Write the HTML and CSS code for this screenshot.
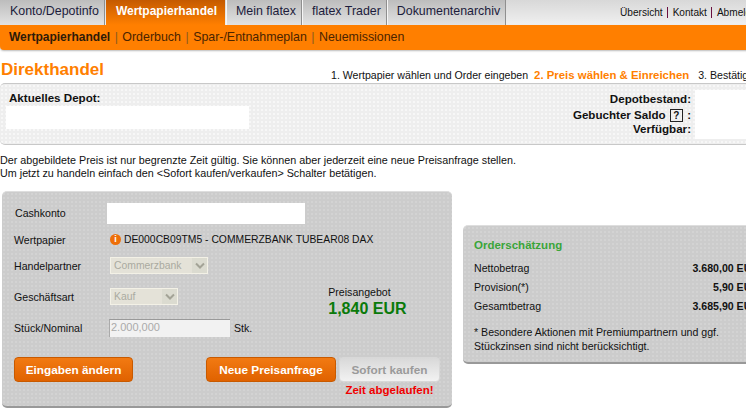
FILE: index.html
```html
<!DOCTYPE html>
<html lang="de">

<head>
  <meta charset="utf-8">
  <title>Direkthandel</title>
  <link rel="stylesheet" href="styles.css">
</head>

<body>
  <div class="page">
    <div class="topbar">
      <div class="tabs">
        <a class="tab tabFirst">Konto/Depotinfo</a>
        <a class="tab tabActive">Wertpapierhandel</a>
        <a class="tab">Mein flatex</a>
        <a class="tab">flatex Trader</a>
        <a class="tab">Dokumentenarchiv</a>
      </div>
      <div class="metaLinks">
        <a>Übersicht</a><span class="metaSep"></span><a>Kontakt</a><span class="metaSep"></span><a>Abmelden</a>
      </div>
    </div>

    <div class="subnav">
      <b>Wertpapierhandel</b><span class="subSep">|</span>Orderbuch<span class="subSep">|</span>Spar-/Entnahmeplan<span class="subSep">|</span>Neuemissionen
    </div>

    <div class="titleRow">
      <h1>Direkthandel</h1>
      <div class="steps">
        <span>1. Wertpapier wählen und Order eingeben</span>
        <b>2. Preis wählen &amp; Einreichen</b>
        <span>3. Bestätigung</span>
      </div>
    </div>

    <div class="depotBox">
      <div class="depotLeft">
        <label>Aktuelles Depot:</label>
        <div class="whiteField depotField"></div>
      </div>
      <div class="depotLabels">
        <div>Depotbestand:</div>
        <div class="saldoLine">Gebuchter Saldo <span class="helpIcon">?</span> :</div>
        <div>Verfügbar:</div>
      </div>
      <div class="whiteField depotValues"></div>
    </div>

    <p class="note">Der abgebildete Preis ist nur begrenzte Zeit gültig. Sie können aber jederzeit eine neue Preisanfrage stellen.<br>Um jetzt zu handeln einfach den &lt;Sofort kaufen/verkaufen&gt; Schalter betätigen.</p>

    <div class="panels">
      <div class="panel orderPanel">
        <div class="row rowCash">
          <label>Cashkonto</label>
          <div class="whiteField cashField"></div>
        </div>
        <div class="row rowPaper">
          <label>Wertpapier</label>
          <span class="infoIcon">i</span>
          <span class="paperName">DE000CB09TM5 - COMMERZBANK TUBEAR08 DAX</span>
        </div>
        <div class="formLower">
          <div>
            <div class="row rowPartner">
              <label>Handelpartner</label>
              <div class="fakeSelect selectPartner">
                <span>Commerzbank</span>
                <span class="selectArrow"><svg width="10" height="7" viewBox="0 0 10 7"><path d="M1 1.5 L5 5.5 L9 1.5" fill="none" stroke="#a3a396" stroke-width="2"/></svg></span>
              </div>
            </div>
            <div class="row rowKind">
              <label>Geschäftsart</label>
              <div class="fakeSelect selectKind">
                <span>Kauf</span>
                <span class="selectArrow"><svg width="10" height="7" viewBox="0 0 10 7"><path d="M1 1.5 L5 5.5 L9 1.5" fill="none" stroke="#a3a396" stroke-width="2"/></svg></span>
              </div>
            </div>
            <div class="row rowAmount">
              <label>Stück/Nominal</label>
              <div class="amountField">2.000,000</div>
              <span class="unit">Stk.</span>
            </div>
          </div>
          <div class="quote">
            <div>Preisangebot</div>
            <div class="quotePrice">1,840 EUR</div>
          </div>
        </div>
        <div class="actions">
          <button type="button" class="btn">Eingaben ändern</button>
          <button type="button" class="btn btnRequest">Neue Preisanfrage</button>
          <div class="buyCol">
            <button type="button" class="btn btnOff">Sofort kaufen</button>
            <div class="expired">Zeit abgelaufen!</div>
          </div>
        </div>
      </div>

      <div class="panel estimate">
        <h2>Orderschätzung</h2>
        <div class="estRow"><span>Nettobetrag</span><b>3.680,00 EUR</b></div>
        <div class="estRow"><span>Provision(*)</span><b>5,90 EUR</b></div>
        <div class="estRow"><span>Gesamtbetrag</span><b>3.685,90 EUR</b></div>
        <p>* Besondere Aktionen mit Premiumpartnern und ggf.<br>Stückzinsen sind nicht berücksichtigt.</p>
      </div>
    </div>
  </div>
</body>

</html>
```

FILE: styles.css
```css
html,
body {
  margin: 0;
  height: 417px;
  overflow: hidden;
  background-color: white;
}

body {
  font-family: "Liberation Sans", Arial, sans-serif;
  font-size: 10px;
  color: #111;
}

.page {
  width: 770px;
}

.topbar {
  display: flex;
  height: 25px;
  background: linear-gradient(#d8d8d8, #f0f0f0);
}

.tabs {
  display: flex;
  width: 620px;
}

.tab {
  height: 25px;
  line-height: 23px;
  padding: 0 5px 0 9px;
  font-size: 12.4px;
  color: #1c1c3c;
  background: linear-gradient(#bdbdbd, #e2e2e2);
  border-right: 1px solid #8f8f8f;
  border-left: 1px solid #f6f6f6;
  box-sizing: border-box;
  white-space: nowrap;
}

.tabFirst {
  padding-left: 10px;
  border-left: none;
}

.tabActive {
  margin: 0 1px;
  padding: 0 8px 0 10px;
  font-size: 12px;
  font-weight: bold;
  color: white;
  background: linear-gradient(#c45a00, #ff7f00);
  border: none;
}

.metaLinks {
  display: flex;
  align-items: center;
  height: 25px;
  font-size: 10.1px;
  white-space: nowrap;
}

.metaSep {
  height: 11px;
  margin: 0 5px 0 4px;
  border-left: 1px solid #6a1040;
}

.subnav {
  height: 25px;
  line-height: 25px;
  padding-left: 9px;
  font-size: 12.4px;
  color: #4a2400;
  background-color: #ff7f00;
  border-bottom-left-radius: 4px;
  box-shadow: 0 1px 2px #bbb;
}

.subnav b {
  font-size: 12px;
  color: #2e1a08;
}

.subSep {
  margin: 0 4.5px;
  color: #8a5a20;
}

.titleRow {
  display: flex;
  height: 33px;
}

.titleRow h1 {
  width: 331px;
  margin: 11px 0 0 0;
  padding-left: 1px;
  box-sizing: border-box;
  font-size: 17px;
  line-height: 18px;
  color: #ff7f00;
}

.steps {
  display: flex;
  align-items: baseline;
  margin-top: 19px;
  font-size: 10.6px;
  line-height: 13px;
  white-space: nowrap;
}

.steps b {
  margin: 0 9px 0 6px;
  font-size: 11.4px;
  color: #ff7f00;
}

.depotBox {
  display: flex;
  box-sizing: border-box;
  height: 62px;
  padding: 6px 0 0 6px;
  background-color: #eeeeee;
  background-image: radial-gradient(#f7f7f7 1px, transparent 1px);
  background-size: 4px 4px;
  border-top: 1px solid #c8c8c8;
  border-bottom: 1px solid #c8c8c8;
  border-radius: 5px 0 0 5px;
  font-size: 11.6px;
  font-weight: bold;
}

.depotLeft {
  width: 427px;
}

.depotLeft label {
  display: block;
  height: 16px;
  line-height: 16px;
  padding-left: 3px;
}

.whiteField {
  background-color: white;
}

.depotField {
  width: 243px;
  height: 23px;
}

.depotLabels {
  width: 258px;
  margin-top: 1px;
  text-align: right;
  line-height: 15px;
}

.depotLabels div {
  height: 15px;
}

.depotLabels .saldoLine {
  height: 14px;
  margin-top: 1px;
}

.helpIcon {
  display: inline-block;
  width: 11px;
  height: 11px;
  line-height: 11px;
  margin: 0 1px;
  border: 1px solid #222;
  text-align: center;
  font-size: 10px;
}

.depotValues {
  width: 60px;
  height: 49px;
  margin-left: 4px;
}

.note {
  margin: 9px 0 11px 0;
  font-size: 10.77px;
  line-height: 13px;
}

.panels {
  display: flex;
  align-items: flex-start;
}

.panel {
  background-color: #cccccc;
  background-image: radial-gradient(#d3d3d3 1px, transparent 1px);
  background-size: 4px 4px;
  box-sizing: border-box;
  border-top: 1px solid #dedede;
  border-bottom: 2px solid #999;
  border-radius: 5px;
  font-size: 10.6px;
}

.orderPanel {
  width: 450px;
  height: 217px;
  margin-left: 2px;
  padding: 11px 0 0 12px;
}

.row {
  display: flex;
  align-items: center;
}

.row label {
  flex: none;
  width: 93px;
}

.rowCash {
  height: 21px;
}

.rowCash label {
  padding-bottom: 2px;
  padding-left: 1px;
  width: 92px;
}

.cashField {
  width: 198px;
  height: 21px;
}

.rowPaper {
  height: 11px;
  margin-top: 10px;
}

.infoIcon {
  flex: none;
  width: 11px;
  height: 11px;
  line-height: 11px;
  margin: 0 3px 0 3px;
  border-radius: 50%;
  background-color: #ee6f08;
  color: white;
  font-size: 9px;
  font-weight: bold;
  text-align: center;
}

.paperName {
  font-size: 10.35px;
}

.formLower {
  display: flex;
}

.rowPartner {
  height: 17px;
  margin-top: 12px;
}

.rowKind {
  height: 17px;
  margin-top: 14px;
}

.rowAmount {
  height: 18px;
  margin-top: 14px;
}

.fakeSelect {
  display: flex;
  box-sizing: border-box;
  height: 17px;
  margin-left: 3px;
  padding: 1px;
  background-color: #f3f1e6;
  color: #aaaaa0;
  font-size: 10.4px;
  line-height: 15px;
}

.fakeSelect span:first-child {
  flex: 1;
  padding-left: 3px;
  background-color: #e4e2d8;
}

.selectPartner {
  width: 98px;
}

.selectKind {
  width: 68px;
}

.selectArrow {
  display: flex;
  align-items: center;
  justify-content: center;
  width: 15px;
  background-color: #dbdbd0;
}

.amountField {
  box-sizing: border-box;
  width: 121px;
  height: 18px;
  margin-left: 2px;
  padding-left: 1px;
  background-color: #f2f2f2;
  border-top: 1px solid #999;
  border-left: 1px solid #aaa;
  color: #aaa;
  font-size: 11px;
  line-height: 15px;
}

.unit {
  margin-left: 4px;
}

.quote {
  margin: 41px 0 0 76px;
  line-height: 12px;
}

.quotePrice {
  margin-top: 2px;
  font-size: 16px;
  font-weight: bold;
  line-height: 17px;
  color: #0a7a0a;
}

.actions {
  display: flex;
  align-items: flex-start;
  margin-top: 20px;
}

.btn {
  height: 25px;
  width: 119px;
  padding: 0;
  background: linear-gradient(#f27a12, #e06200);
  border: 1px solid #c85a00;
  border-radius: 4px;
  color: white;
  font-family: "Liberation Sans", Arial, sans-serif;
  font-size: 11.8px;
  font-weight: bold;
}

.btnRequest {
  width: 130px;
  margin: 0 3px 0 73px;
}

.btnOff {
  width: 101px;
  background: linear-gradient(#d8d8d8, #f2f2f2);
  border-color: #d8d8d8;
  color: #9a9a9a;
}

.expired {
  margin-top: 1px;
  font-size: 11.5px;
  line-height: 14px;
  font-weight: bold;
  color: #f00000;
  text-align: center;
}

.estimate {
  width: 300px;
  height: 139px;
  margin: 34px 0 0 11px;
  padding: 12px 0 0 11px;
}

.estimate h2 {
  margin: 0 0 7px 0;
  font-size: 11.5px;
  line-height: 14px;
  color: #3aa53a;
}

.estRow {
  display: flex;
  justify-content: space-between;
  height: 19px;
  line-height: 19px;
  width: 285px;
}

.estimate p {
  margin: 9px 0 0 0;
  line-height: 14px;
}
```
